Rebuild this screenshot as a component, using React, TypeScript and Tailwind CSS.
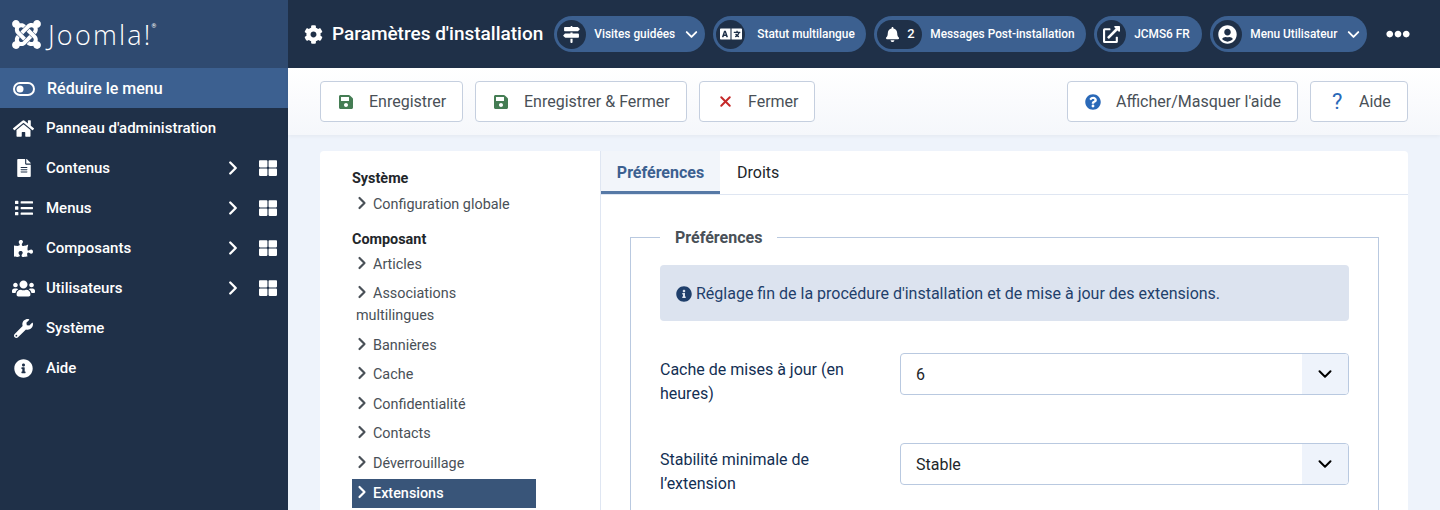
import type { ReactNode } from "react";
import {
  FaBell,
  FaCog,
  FaExternalLinkAlt,
  FaFileAlt,
  FaHome,
  FaInfoCircle,
  FaJoomla,
  FaLanguage,
  FaList,
  FaPuzzlePiece,
  FaQuestionCircle,
  FaSave,
  FaUserCircle,
  FaUsers,
  FaWrench,
  FaEllipsisH,
  FaThLarge,
} from "react-icons/fa";
import { FaSignsPost } from "react-icons/fa6";
import { LuChevronDown, LuChevronRight, LuX } from "react-icons/lu";

const menu = [
  { label: "Panneau d'administration", icon: <FaHome className="text-[21px]" />, more: false },
  { label: "Contenus", icon: <FaFileAlt className="text-[18px]" />, more: true },
  { label: "Menus", icon: <FaList className="text-[18px]" />, more: true },
  { label: "Composants", icon: <FaPuzzlePiece className="text-[19px]" />, more: true },
  { label: "Utilisateurs", icon: <FaUsers className="text-[23px]" />, more: true },
  { label: "Système", icon: <FaWrench className="text-[19px]" />, more: false },
  { label: "Aide", icon: <FaInfoCircle className="text-[19px]" />, more: false },
];

const Sidebar = () => (
  <aside className="flex w-[288px] shrink-0 flex-col bg-[#1f3048] text-white">
    <div className="flex h-[68px] items-center gap-[5px] bg-[#2f4a70] pl-[10px]">
      <FaJoomla className="text-[33px]" />
      <span className="font-['Open_Sans'] text-[27px] leading-none font-light tracking-[2.2px]">
        Joomla!
      </span>
      <span className="mb-[18px] -ml-[6px] text-[6px]">®</span>
    </div>
    <div className="flex h-[40px] items-center bg-[#3c6090] pt-[1px] pl-[13px] text-[16px] font-medium">
      <svg width="22" height="14" viewBox="0 0 22 14" className="mr-[12px]">
        <rect x="1" y="1" width="20" height="12" rx="6" fill="none" stroke="white" strokeWidth="2" />
        <circle cx="7" cy="7" r="3.5" fill="white" />
      </svg>
      Réduire le menu
    </div>
    {menu.map((item) => (
      <div key={item.label} className="flex h-[40px] items-center text-[15px] font-medium">
        <span className="flex w-[46px] justify-center pl-[1px]">{item.icon}</span>
        <span className="flex-1 pt-[1px]">{item.label}</span>
        {item.more && (
          <>
            <LuChevronRight className="mr-[15px] text-[22px]" strokeWidth={2.6} />
            <FaThLarge className="mr-[11px] text-[18px]" />
          </>
        )}
      </div>
    ))}
  </aside>
);

const Pill = ({
  icon,
  label,
  chevron,
  gap,
  className,
}: {
  icon: ReactNode;
  label: string;
  chevron?: boolean;
  gap: string;
  className: string;
}) => (
  <div className={`flex h-[36px] items-center rounded-full bg-[#3c6090] pl-[3px] text-[11.85px] font-medium text-white ${className}`}>
    {icon}
    <span className={`pt-[1px] ${gap}`}>{label}</span>
    {chevron && <LuChevronDown className="ml-[7px] text-[19px]" strokeWidth={2.4} />}
  </div>
);

const Round = ({ children }: { children: ReactNode }) => (
  <span className="flex h-[29px] w-[29px] items-center justify-center rounded-full bg-[#1f3048] text-[17px]">
    {children}
  </span>
);

const Header = () => (
  <header className="flex h-[68px] shrink-0 items-center bg-[#1f3048] pl-[16px] text-white">
    <FaCog className="text-[19px]" />
    <h1 className="mr-[11px] ml-[9px] pt-[1px] text-[19px] font-medium whitespace-nowrap">Paramètres d'installation</h1>
    <div className="flex items-center gap-[8px]">
      <Pill className="w-[151px]" gap="ml-[8px]" icon={<Round><FaSignsPost /></Round>} label="Visites guidées" chevron />
      <Pill className="w-[153px]" gap="ml-[12px]" icon={<Round><FaLanguage className="text-[22px]" /></Round>} label="Statut multilangue" />
      <Pill
        className="w-[212px]"
        gap="ml-[8px]"
        icon={
          <span className="flex h-[29px] w-[45px] items-center gap-[7px] rounded-full bg-[#1f3048] pl-[8px] text-[15px]">
            <FaBell />
            <span className="text-[13px]">2</span>
          </span>
        }
        label="Messages Post-installation"
      />
      <Pill className="w-[108px]" gap="ml-[8px]" icon={<Round><FaExternalLinkAlt /></Round>} label="JCMS6 FR" />
      <Pill className="w-[157px]" gap="ml-[8px]" icon={<Round><FaUserCircle className="text-[19px]" /></Round>} label="Menu Utilisateur" chevron />
    </div>
    <FaEllipsisH className="ml-[19px] text-[24px]" />
  </header>
);

const ToolButton = ({ icon, label, className }: { icon: ReactNode; label: string; className: string }) => (
  <button className={`flex h-[41px] items-center rounded-[4px] border border-[#c5cfdf] bg-white pl-[17px] text-[16px] text-[#495057] ${className}`}>
    <span className="flex w-[31px] items-center text-[16px]">{icon}</span>
    {label}
  </button>
);

const Toolbar = () => (
  <div className="flex h-[67px] shrink-0 items-center gap-[12px] bg-gradient-to-b from-white to-[#f5f7fb] px-[32px] shadow-[0_1px_4px_rgba(0,0,0,0.05)]">
    <ToolButton className="w-[143px]" icon={<FaSave className="text-[#457d54]" />} label="Enregistrer" />
    <ToolButton className="w-[212px]" icon={<FaSave className="text-[#457d54]" />} label="Enregistrer & Fermer" />
    <ToolButton className="w-[116px]" icon={<LuX className="text-[17px] text-[#c52827]" strokeWidth={2.8} />} label="Fermer" />
    <div className="flex-1" />
    <ToolButton className="w-[231px]" icon={<FaQuestionCircle className="text-[#2a69b8]" />} label="Afficher/Masquer l'aide" />
    <ToolButton className="w-[98px]" icon={<span className="pl-[4px] text-[22px] leading-none text-[#2a69b8]">?</span>} label="Aide" />
  </div>
);

const NavItem = ({ label, active }: { label: string; active?: boolean }) => (
  <li className={`px-[4px] py-[4px] leading-[21.6px] ${active ? "bg-[#395579] font-medium text-white" : "text-[#495057]"}`}>
    <LuChevronRight className={`-my-[4px] mr-[1px] -ml-[4px] inline-block align-[0px] text-[20px] ${active ? "text-white" : "text-[#495057]"}`} strokeWidth={2.6} />
    {label}
  </li>
);

const SideNav = () => (
  <nav className="w-[281px] shrink-0 border-r border-[#dfe6f2] pt-[16px] pl-[32px] text-[14.4px]">
    <ul className="w-[184px]">
      <li className="pt-[1px] leading-[21.6px] font-bold text-[#22262a]">Système</li>
      <NavItem label="Configuration globale" />
    </ul>
    <ul className="mt-[9px] w-[184px]">
      <li className="-mb-[1px] pt-[1px] leading-[21.6px] font-bold text-[#22262a]">Composant</li>
      <NavItem label="Articles" />
      <NavItem label="Associations multilingues" />
      <NavItem label="Bannières" />
      <NavItem label="Cache" />
      <NavItem label="Confidentialité" />
      <NavItem label="Contacts" />
      <NavItem label="Déverrouillage" />
      <NavItem label="Extensions" active />
    </ul>
  </nav>
);

const SelectRow = ({ label, value }: { label: string; value: string }) => (
  <div className="mb-[37px] flex">
    <label className="w-[240px] pt-[5px] pr-[30px] text-[16px] leading-[24px] text-[#132f53]">{label}</label>
    <div className="flex h-[42px] flex-1 overflow-hidden rounded-[4px] border border-[#b9c9e0] text-[16px] text-[#22262a]">
      <span className="flex flex-1 items-center pt-[1px] pl-[15px]">{value}</span>
      <span className="flex w-[46px] items-center justify-center bg-[#eef3fb]">
        <LuChevronDown className="text-[22px] text-black" strokeWidth={2.2} />
      </span>
    </div>
  </div>
);

const Preferences = () => (
  <section className="min-w-0 flex-1">
    <div className="flex h-[44px] border-b border-[#dfe6f2] text-[16px]">
      <div className="flex w-[119px] items-center justify-center border-b-[3px] border-[#5679a6] bg-[#f2f5fa] pt-[4px] font-bold text-[#3c6090]">
        Préférences
      </div>
      <div className="flex items-center pt-[1px] pl-[17px] text-[#22262a]">Droits</div>
    </div>
    <div className="px-[29px] pt-[33px]">
      <fieldset className="border border-[#b9c9e0] px-[29px] pt-[18px]">
        <legend className="px-[15px] text-[16px] leading-[19px] font-bold text-[#495057]">Préférences</legend>
        <div className="mb-[32px] flex h-[56px] items-center rounded-[4px] bg-[#dce3ef] pt-[2px] pl-[16px] text-[16px] text-[#1f3f6b]">
          <FaInfoCircle className="mr-[4px] text-[16px]" />
          Réglage fin de la procédure d'installation et de mise à jour des extensions.
        </div>
        <SelectRow label="Cache de mises à jour (en heures)" value="6" />
        <SelectRow label="Stabilité minimale de l’extension" value="Stable" />
      </fieldset>
    </div>
  </section>
);

const App = () => (
  <div className="flex h-[510px] overflow-hidden bg-[#eef3fb] font-['Roboto',sans-serif]">
    <Sidebar />
    <main className="flex min-w-0 flex-1 flex-col">
      <Header />
      <Toolbar />
      <div className="mx-[32px] mt-[16px] flex flex-1 rounded-t-[4px] bg-white">
        <SideNav />
        <Preferences />
      </div>
    </main>
  </div>
);

export default App;
